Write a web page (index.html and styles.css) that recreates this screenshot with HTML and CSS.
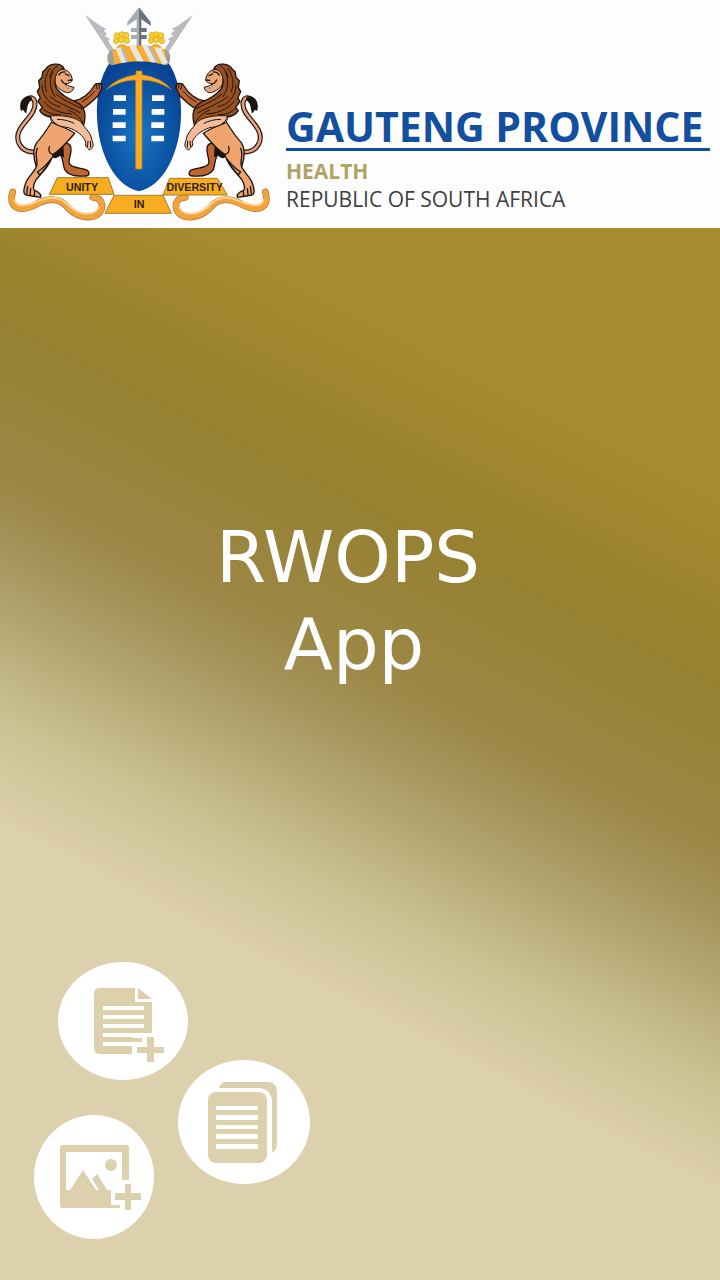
FILE: index.html
```
<!DOCTYPE html>
<html lang="en">
<head>
<meta charset="utf-8">
<meta name="viewport" content="width=device-width, initial-scale=1">
<title>RWOPS App</title>
<link rel="stylesheet" href="styles.css">
</head>
<body>
<div class="splash">
  <header class="brand">
    <svg class="emblem" viewBox="0 0 834 684" role="img" aria-label="Gauteng coat of arms">
      <defs>
        <radialGradient id="shieldFill" cx="50%" cy="58%" r="58%">
          <stop offset="0" stop-color="#1a74c4"/>
          <stop offset="0.5" stop-color="#0f5cab"/>
          <stop offset="1" stop-color="#094293"/>
        </radialGradient>
        <clipPath id="torse"><path d="M336 150 Q417 122 498 150 Q514 158 510 180 Q508 194 496 195 Q417 172 338 195 Q322 194 322 178 Q321 158 336 150Z"/></clipPath>
        <g id="lion" stroke="#1d1512" stroke-width="4" stroke-linejoin="round" stroke-linecap="round">
          <path d="M104 456 C62 458 42 420 60 388 C76 360 108 338 105 308 C102 292 90 288 78 300" fill="none" stroke-width="15"/>
          <path d="M104 456 C62 458 42 420 60 388 C76 360 108 338 105 308 C102 292 90 288 78 300" fill="none" stroke="#e8a27a" stroke-width="8"/>
          <path d="M92 291 C72 288 58 305 64 330 L70 327 L77 337 L80 322 C82 310 88 302 94 297Z" fill="#1d1512"/>
          <path d="M156 460 L188 434 C202 426 212 432 213 446 C215 462 204 480 208 491 C216 506 244 502 262 511 C271 519 268 529 255 528 C230 530 204 525 194 509 C188 490 190 475 180 464 C172 474 158 478 156 460Z" fill="#bf6530"/>
          <path d="M158 458 L188 436 L190 470 L180 463 Q170 475 160 468Z" fill="#1d1512"/>
          <path d="M155 366 C140 390 125 412 110 428 C96 450 102 480 109 500 C100 520 80 535 77 550 C72 565 67 580 78 585 L96 588 L121 592 C127 585 115 575 102 570 C96 555 106 540 120 525 C140 500 155 482 160 463 C182 450 202 426 224 400 C205 385 180 380 155 366Z" fill="#f0a56f"/>
          <path d="M109 500 C116 485 102 465 112 445 M120 525 C132 512 145 498 150 485 L154 476 C142 492 128 506 112 516Z M148 440 C144 455 150 462 160 463 M83 560 L80 580 M92 566 L90 584 M104 574 L103 588" fill="none"/>
          <path d="M222 302 C245 300 268 282 282 258 L288 251 L304 250 L306 266 C296 275 300 285 290 292 C275 305 262 320 240 330Z" fill="#bd632f"/>
          <path d="M289 254 L292 268 M297 252 L299 266 M246 306 Q270 292 284 274" fill="none" stroke-width="3"/>
          <path d="M137 208 C146 190 182 186 192 205 C176 215 160 232 167 260 C180 285 210 298 232 308 C254 320 260 345 250 378 C230 365 205 352 178 350 C152 354 130 350 119 332 L127 322 L114 304 L121 294 L112 275 L119 262 L116 242 L126 232 L128 216Z" fill="#96501f"/>
          <path d="M150 205 C136 225 130 250 140 275 M158 215 C146 240 150 270 165 290 M126 255 C126 290 150 315 180 320 M132 305 C155 332 185 340 215 342 M150 290 C180 312 210 322 240 338 M168 282 C190 302 215 310 246 326 M128 325 C142 340 160 344 180 344 M172 198 C158 208 152 218 150 232 M205 330 C225 338 240 352 248 368" fill="none" stroke-width="3"/>
          <path d="M187 208 C202 209 211 218 215 231 C220 243 212 249 203 250 L196 253 L208 258 L222 262 C218 276 206 281 195 276 C180 270 170 262 166 250 C163 230 171 210 187 208Z" fill="#eaa777" stroke-width="3"/>
          <path d="M196 222 L207 227 M184 240 Q190 252 200 252 M176 225 Q184 214 194 216 M205 241 L216 240" fill="none"/>
          <path d="M198 256 L206 258 L205 266Z" fill="#fff" stroke-width="1"/>
          <path d="M150 348 C180 344 232 350 246 370 C256 386 274 400 275 418 C283 436 279 446 268 450 C262 440 254 444 257 425 C250 408 232 392 205 383 C180 380 160 374 150 348Z" fill="#f2bc98" stroke-width="3"/>
          <path d="M152 350 Q150 368 165 372 M264 424 L262 440 M271 424 L272 442 M172 358 Q200 358 222 370" fill="none" stroke-width="3"/>
        </g>
        <g id="scroll" fill="none" stroke-linecap="round" stroke-linejoin="round">
          <path d="M38 576 C22 628 66 640 118 608 C160 590 186 600 206 626 C236 656 290 662 304 630 C312 606 298 592 278 592" stroke="#a9762c" stroke-width="20"/>
          <path d="M38 576 C22 628 66 640 118 608 C160 590 186 600 206 626 C236 656 290 662 304 630 C312 606 298 592 278 592" stroke="#f3a33c" stroke-width="16"/>
          <path d="M44 600 C50 624 80 618 118 602 C160 584 190 596 212 622 C240 646 284 650 296 622" stroke="#ffd28e" stroke-width="6"/>
        </g>
        <g id="spear">
          <path d="M255 45 L303 79 L319 86 L311 92 L321 101 L314 107 L330 117 L324 123 L345 153 L332 162Z" fill="#b9bbc0"/>
        </g>
        <g id="flower" fill="#f6cf32" stroke="#d9a51c" stroke-width="2">
          <circle cx="351" cy="107" r="9"/><circle cx="378" cy="106" r="9"/><circle cx="365" cy="103" r="8"/>
          <circle cx="348" cy="123" r="8"/><circle cx="381" cy="122" r="8"/><circle cx="365" cy="119" r="9"/>
          <path d="M350 143 Q364 124 381 140Z" fill="#f3b127"/>
        </g>
      </defs>
      <use href="#spear"/><use href="#spear" transform="translate(834 0) scale(-1 1)"/>
      <path d="M417 22 L382 66 L382 77 L410 58 L410 84 L393 84 L393 96 L410 96 L410 105 L393 105 L393 117 L410 117 L410 142 L417 142Z" fill="#a9adb3"/>
      <path d="M417 22 L452 66 L452 77 L424 58 L424 84 L440 84 L440 96 L424 96 L424 105 L440 105 L440 117 L424 117 L424 142 L417 142Z" fill="#69737e"/>
      <use href="#flower"/><use href="#flower" transform="translate(834 0) scale(-1 1)"/>
      <path d="M332 184 C298 230 289 295 291 350 C294 455 342 558 417 574 C492 558 540 455 543 350 C545 295 536 230 502 184 Q417 160 332 184Z" fill="url(#shieldFill)"/>
      <g clip-path="url(#torse)">
        <path d="M315 120h205v80H315z" fill="#f5ae35"/>
        <g stroke-width="17">
          <path d="M326 135 L336 205 M502 132 L508 202" stroke="#9b9da1"/>
          <path d="M352 135 L378 200 M392 128 L424 190 M430 126 L462 188 M466 130 L496 192" stroke="#e8e6df"/>
          <path d="M362 135 L388 200 M440 126 L472 188" stroke="#b7b9bb" stroke-width="7"/>
        </g>
      </g>
      <path d="M408 213 H426 V224 Q483 232 514 268 Q470 240 426 240 V507 H407 V240 Q364 240 319 268 Q352 232 408 224Z" fill="#f8ac24" stroke="#b98324" stroke-width="2"/>
      <g fill="#fff">
        <path d="M341 286h37v17h-37zM339 327h38v17h-38zM338 367h39v17h-39zM338 407h39v17h-39z"/>
        <path d="M456 286h37v17h-37zM455 327h38v17h-38zM454 367h38v17h-38zM454 407h38v17h-38z"/>
      </g>
      <use href="#scroll"/><use href="#scroll" transform="translate(834 0) scale(-1 1)"/>
      <use href="#lion"/><use href="#lion" transform="translate(834 0) scale(-1 1)"/>
      <g fill="#f8ad20" stroke="#a67b2c" stroke-width="3">
        <path d="M172 533 H325 L342 583 H148Z"/>
        <path d="M509 535 H652 L682 585 H489Z"/>
        <path d="M342 586 H489 L514 640 H315Z"/>
      </g>
      <g class="motto">
        <text x="246" y="572">UNITY</text>
        <text x="584" y="573">DIVERSITY</text>
        <text x="417" y="624">IN</text>
      </g>
    </svg>
    <div class="brand-text">
      <p class="province">GAUTENG PROVINCE</p>
      <p class="department">HEALTH</p>
      <p class="republic">REPUBLIC OF SOUTH AFRICA</p>
    </div>
  </header>
  <main class="hero">
    <h1 class="app-name"><span class="acronym">RWOPS</span> <span class="suffix">App</span></h1>
    <svg class="badges" viewBox="0 0 276 277" aria-hidden="true">
      <g fill="#fff">
        <ellipse cx="89" cy="59" rx="65" ry="59"/>
        <ellipse cx="210" cy="160" rx="66" ry="62"/>
        <ellipse cx="60" cy="215" rx="60" ry="62"/>
      </g>
      <g fill="#ddd0ac">
        <path d="M66 26 H101 V40 H118 V71 H108 V75 H98 V92 H66 Q60 92 60 86 V32 Q60 26 66 26Z"/>
        <path d="M104 26 L118 37 H104Z"/>
        <path d="M98 76 H108 V80 H98Z"/>
        <path d="M113 75h7v10h10v6h-10v9h-7v-9h-10v-6h10z"/>
        <path d="M191 120 H235 Q243 121 243 130 V182 Q243 188 238 191 V138 Q236 126 224 126 H185 Q186 121 191 120Z"/>
        <rect x="174" y="130" width="59" height="71" rx="8"/>
      </g>
      <path fill="#fff" d="M69 44h41v4H69zM69 53h41v4H69zM69 62h41v4H69zM69 71h41v4H69zM69 80h34v4H69zM98 84h5v8h-5zM182 144h42v4h-42zM182 153h42v5h-42zM182 163h42v4h-42zM182 172h42v5h-42zM182 182h42v5h-42z"/>
      <path fill="#ddd0ac" fill-rule="evenodd" d="M28 183 H92 Q95 183 95 186 V218 H88 V190 H32 V228 H36 L49 208 L62 228 H65 L58 217 L63 212 L73 228 H77 V243 H86 V246 H28 Q26 246 26 243 V186 Q26 183 28 183Z"/>
      <circle cx="77" cy="203" r="6" fill="#ddd0ac"/>
      <path fill="#ddd0ac" d="M91 222h6v9h10v7h-10v10h-6v-10h-10v-7h10z"/>
    </svg>
  </main>
</div>
</body>
</html>
```
FILE: styles.css
```
* {
  box-sizing: border-box;
}

body {
  margin: 0;
  font-family: "DejaVu Sans", sans-serif;
}

.splash {
  display: flex;
  flex-direction: column;
  min-height: 100vh;
}

.brand {
  display: flex;
  align-items: flex-end;
  gap: 8px;
  padding-right: 10px;
  background: #fdfdfd;
}

.emblem {
  display: block;
  flex: none;
  width: 278px;
  height: 228px;
}

.motto {
  font-family: "Liberation Sans", sans-serif;
  font-size: 32px;
  font-weight: bold;
  text-anchor: middle;
  fill: #2b2115;
}

.brand-text {
  flex: 1;
  min-width: 0;
  padding-bottom: 16px;
  font-family: "Open Sans", "Noto Sans", sans-serif;
  white-space: nowrap;
}

.brand-text p {
  margin: 0;
}

.province {
  border-bottom: 3px solid #124f9f;
  color: #124f9f;
  font-size: 41px;
  font-weight: 700;
  line-height: 44px;
}

.department {
  padding-top: 4px;
  color: #b3a264;
  font-size: 21px;
  font-weight: 700;
  line-height: 32px;
}

.republic {
  color: #3e3d40;
  font-size: 21px;
  font-weight: 500;
  line-height: 25px;
}

.hero {
  display: flex;
  flex: 1;
  flex-direction: column;
  justify-content: space-between;
  padding: 286px 12px 41px 0;
  background: linear-gradient(207deg, #a68d2f 18%, #9c832e 27%, #978132 33%, #9c8847 44%, #a5935a 48%, #b2a670 53%, #cbc092 60%, #ddd0ac 68%);
}

.app-name {
  display: flex;
  flex-direction: column;
  margin: 0;
  color: #fff;
  font-size: 72px;
  font-weight: normal;
  line-height: 87px;
  text-align: center;
}

.acronym {
  padding-right: 12px;
}

.badges {
  width: 276px;
  height: 277px;
  margin-left: 34px;
}
```
